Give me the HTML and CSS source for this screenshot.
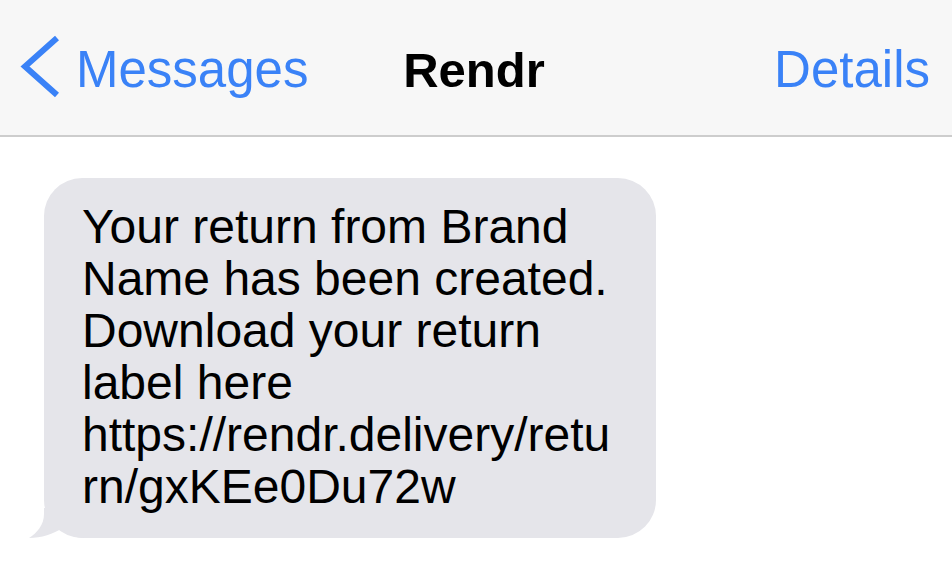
FILE: index.html
```html
<!DOCTYPE html>
<html lang="en">
<head>
    <meta charset="UTF-8">
    <meta name="viewport" content="width=device-width, initial-scale=1.0">
    <title>Rendr</title>
    <link rel="stylesheet" href="styles.css">
</head>
<body>
    <header class="nav-bar">
        <div class="nav-back">
            <svg class="chevron" width="44" height="68" viewBox="0 0 44 68">
                <polyline points="39,5 7,33.5 39,62" fill="none" stroke="#3a82f7" stroke-width="6" stroke-linejoin="miter"/>
            </svg>
            <span>Messages</span>
        </div>
        <div class="nav-title">Rendr</div>
        <div class="nav-details">Details</div>
    </header>
    <main class="thread">
        <div class="bubble">
            <p class="bubble-text">Your return from Brand Name has been created. Download your return label here https://rendr.delivery/return/gxKEe0Du72w</p>
            <!-- cola del globo -->
            <svg class="tail" width="60" height="30" viewBox="0 0 60 30">
                <path d="M20 0 L20 6 C20 17 13 25 5 30 C17 30 30 26 38 20 C45 27 52 30 60 30 L60 0 Z" fill="#e5e5ea"/>
            </svg>
        </div>
    </main>
</body>
</html>
```

FILE: styles.css
```css
body {
    font-family: 'Liberation Sans', Arial, sans-serif;
    background-color: #ffffff;
    color: #000000;
    margin: 0;
    padding: 0;
}
.nav-bar {
    display: grid;
    grid-template-columns: 1fr auto 1fr;
    align-items: center;
    height: 131px;
    padding: 4px 22px 0 18px;
    background-color: #f7f7f7;
    border-bottom: 2px solid #cdcdcd;
    font-size: 51px;
    line-height: 50px;
}
.nav-back {
    display: flex;
    align-items: center;
    color: #3a82f7;
}
.chevron {
    display: block;
    margin-right: 14px;
    margin-top: -6px;
}
.nav-title {
    font-weight: bold;
    font-size: 49px;
    color: #000;
}
.nav-details {
    justify-self: end;
    color: #3a82f7;
}
.thread {
    padding: 41px 0 20px 44px;
}
.bubble {
    position: relative;
    width: 538px;
    padding: 23px 36px 25px 38px;
    background-color: #e5e5ea;
    border-radius: 38px;
}
.bubble-text {
    margin: 0;
    font-size: 48px;
    line-height: 52px;
    overflow-wrap: anywhere;
}
.tail {
    position: absolute;
    left: -20px;
    bottom: 0;
    display: block;
}
```
